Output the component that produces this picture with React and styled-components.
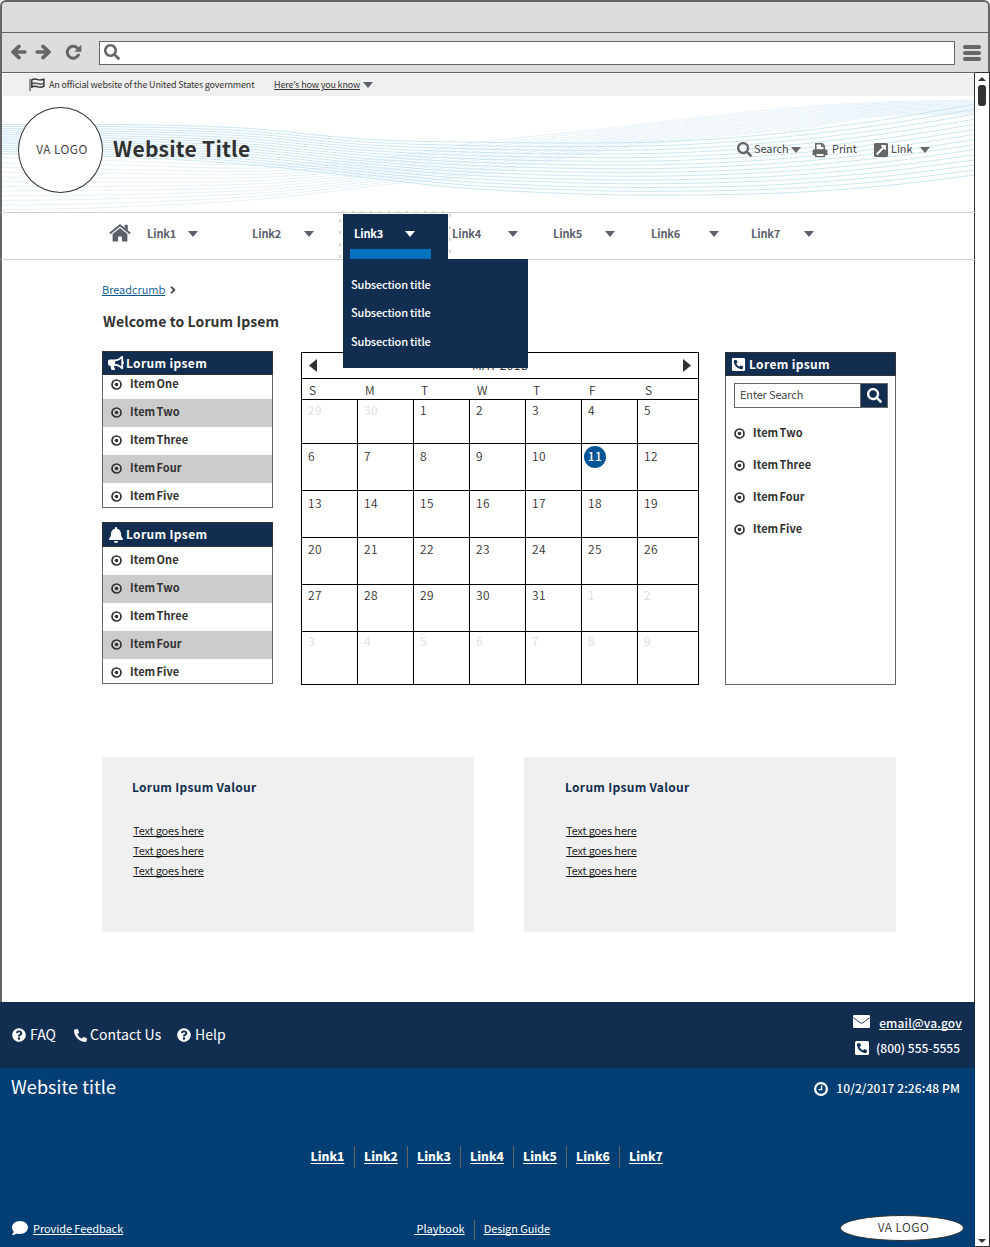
import React from 'react';
import styled, { createGlobalStyle, css } from 'styled-components';
import {
  FaSearch, FaBullhorn, FaBell,
  FaPhoneAlt, FaPhoneSquareAlt, FaQuestionCircle, FaComment, FaExternalLinkSquareAlt,
  FaChevronRight,
} from 'react-icons/fa';

const color = {
  navy: '#112e51',
  blue: '#003e73',
  accent: '#0071bc',
  link: '#005596',
  ink: '#323232',
  nav: '#5b616b',
  frame: '#666666',
  chrome: '#dddddd',
  pale: '#f0f0f0',
  rule: '#d2d2d2',
};

const Global = createGlobalStyle`
  * { box-sizing: border-box; }
  body {
    margin: 0;
    background: #fff;
    color: ${color.ink};
    font-family: "Noto Sans CJK JP", "Noto Sans", sans-serif;
    font-size: 11px;
    line-height: 16px;
    white-space: nowrap;
  }
  svg { display: block; flex: none; }
`;

/* ---------- browser chrome ---------- */

const Browser = styled.div`
  width: 990px;
  height: 1247px;
  display: flex;
  flex-direction: column;
`;

const Chrome = styled.div`
  height: 73px;
  border: 2px solid ${color.frame};
  border-bottom-width: 1px;
  border-radius: 6px 6px 0 0;
  background: ${color.chrome};
`;

const TitleBar = styled.div`
  height: 31px;
  border-bottom: 1px solid ${color.frame};
`;

const Toolbar = styled.div`
  display: flex;
  align-items: center;
  height: 39px;
  padding: 0 7px 0 8px;
  color: ${color.frame};
`;

const ToolButtons = styled.div`
  display: flex;
  align-items: center;
  width: 89px;
  gap: 8px;
  padding-bottom: 1px;

  svg:last-child { margin-left: 5px; }
`;

const AddressBar = styled.div`
  display: flex;
  align-items: center;
  width: 856px;
  height: 24px;
  margin-right: 8px;
  padding: 0 0 2px 4px;
  border: 1px solid ${color.frame};
  background: #fff;
`;

const MenuBars = styled.div`
  display: grid;
  gap: 2px;
  padding-top: 1px;

  i { width: 18px; height: 4px; border-radius: 2px; background: ${color.frame}; }
`;

const Viewport = styled.div`
  display: flex;
  flex: 1;
`;

const Page = styled.div`
  display: flex;
  flex-direction: column;
  width: 975px;
`;

const Sheet = styled.div`
  height: 929px;
  border-left: 2px solid ${color.frame};
  border-right: 1px solid ${color.ink};
  background: #fff;
`;

const Scrollbar = styled.div`
  display: flex;
  flex-direction: column;
  align-items: center;
  justify-content: space-between;
  width: 15px;
  margin-top: -1px;
  padding: 4px 0 3px;
  border: solid ${color.ink};
  border-width: 1px 1px 1px 0;
  background: #fff;
`;

const ScrollTop = styled.div`
  display: grid;
  justify-items: center;
  gap: 4px;
`;

const Thumb = styled.div`
  width: 8px;
  height: 21px;
  border-radius: 3px;
  background: ${color.ink};
`;

/* ---------- header ---------- */

const Banner = styled.div`
  display: flex;
  align-items: center;
  height: 22px;
  margin: 1px 0 0 1px;
  padding-left: 26px;
  background: ${color.pale};
  font-size: 9px;
`;

const BannerText = styled.span`
  width: 225px;
  margin-left: 4px;
  letter-spacing: -0.16px;
`;

const BannerLink = styled.a`
  margin-right: 3px;
  letter-spacing: -0.17px;
  text-decoration: underline;
  text-underline-offset: 1px;
`;

const Header = styled.header`
  position: relative;
  display: flex;
  align-items: center;
  height: 116px;
  padding: 0 44px 8px 16px;
`;

const WaveLines = styled.svg`
  position: absolute;
  left: 0;
  top: 0;
`;

const Logo = styled.div`
  position: relative;
  display: grid;
  place-items: center;
  width: ${(p) => p.$w}px;
  height: ${(p) => p.$h}px;
  border: 1px solid ${color.ink};
  border-radius: 50%;
  background: #fff;
  color: ${color.ink};
  font-size: 12px;
  font-weight: 350;
  letter-spacing: 0.4px;
  padding: 0 0 2px 3px;
`;

const SiteTitle = styled.h1`
  position: relative;
  flex: 1;
  margin: 0 0 5px 10px;
  font-size: 21px;
  line-height: 30px;
  font-weight: 700;
  letter-spacing: 0.25px;
`;

const Action = styled.div`
  position: relative;
  display: flex;
  align-items: center;
  width: ${(p) => p.$w}px;
  height: 18px;
  margin-bottom: 1px;
  color: ${color.frame};
`;

const ActionLabel = styled.span`
  width: ${(p) => p.$w}px;
  margin: 0 0 3px ${(p) => p.$gap}px;
  color: ${color.ink};
  font-weight: 350;
`;

/* ---------- navigation ---------- */

const Nav = styled.nav`
  position: relative;
  display: flex;
  height: 48px;
  margin: 0 -1px;
  padding-left: 108px;
  border: solid ${color.rule};
  border-width: 1px 0;
  color: ${color.nav};
`;

const HomeLink = styled.div`
  width: 38px;
  padding-top: 11px;
`;

const NavItem = styled.div`
  position: relative;
  display: flex;
  width: ${(p) => p.$w}px;
  height: 46px;
  padding: 12px 0 0 ${(p) => p.$pad || 0}px;

  ${(p) => p.$open && css`
    height: 45px;
    margin-top: 1px;
    padding-top: 11px;
    background: ${color.navy};
    color: #fff;
  `}
`;

const NavLabel = styled.span`
  width: ${(p) => p.$w}px;
  font-weight: 700;
  letter-spacing: -0.15px;
`;

const NavCaret = styled.span`
  padding-top: 6px;
`;

const ActiveBar = styled.div`
  position: absolute;
  left: 7px;
  bottom: 0;
  width: 81px;
  height: 10px;
  background: ${color.accent};
`;

const Submenu = styled.div`
  position: absolute;
  z-index: 2;
  left: 0;
  top: 45px;
  display: grid;
  align-content: start;
  gap: 12.3px;
  width: 185px;
  height: 109px;
  padding: 17px 8px;
  background: ${color.navy};
  font-weight: 500;
  letter-spacing: -0.18px;
`;

const FocusDots = styled.svg`
  position: absolute;
  left: -5px;
  top: -5px;
`;

/* ---------- main ---------- */

const Main = styled.main`
  padding: 21px 78px 0 100px;
`;

const Breadcrumb = styled.div`
  display: flex;
  align-items: center;
  gap: 4px;

  a {
    color: ${color.link};
    font-weight: 350;
    text-decoration: underline;
    text-underline-offset: 1px;
  }
  svg { margin-top: 2px; stroke: currentColor; stroke-width: 40px; }
`;

const Welcome = styled.h2`
  margin: 13px 0 0 1px;
  font-size: 14px;
  line-height: 22px;
  font-weight: 700;
  letter-spacing: 0.1px;
`;

const Columns = styled.div`
  display: grid;
  grid-template-columns: 171px 398px 171px;
  column-gap: 28px;
  height: 334px;
  margin-top: 19px;

  > :last-child { margin-left: -2px; }
`;

const Stack = styled.div`
  display: flex;
  flex-direction: column;
  gap: 14px;
`;

const Panel = styled.section`
  display: flex;
  flex-direction: column;
  width: 171px;
  height: ${(p) => p.$h}px;
  border: 1px solid ${color.frame};
  margin-top: ${(p) => p.$top || 0}px;
`;

const PanelHead = styled.div`
  display: flex;
  align-items: center;
  flex: none;
  gap: ${(p) => p.$gap}px;
  height: ${(p) => p.$h || 24}px;
  margin: -1px -1px 0;
  padding-left: 5px;
  border: 1px solid ${color.ink};
  background: ${color.navy};
  color: #fff;
  font-size: 12px;
  font-weight: 700;
  letter-spacing: 0.35px;

  span { margin-bottom: 1px; }
`;

const ItemList = styled.ul`
  display: flex;
  flex-direction: column;
  justify-content: flex-end;
  height: ${(p) => p.$h}px;
  margin: 0;
  padding: 0;
  overflow: hidden;
  list-style: none;
`;

const Item = styled.li`
  display: flex;
  flex: none;
  align-items: center;
  gap: 8.5px;
  height: ${(p) => p.$h || 28}px;
  padding: 0 0 4px 8px;
  background: ${(p) => (p.$shade ? '#cccccc' : 'transparent')};
  font-weight: 700;
  word-spacing: -1.2px;
  letter-spacing: 0.05px;

  svg { margin: 3px 0 0 -0.5px; }
  &:last-child { margin-bottom: ${(p) => p.$clip || 0}px; }
`;

const SearchBox = styled.div`
  display: flex;
  width: 154px;
  height: 25px;
  margin: 7px 0 10px 8px;
  border: 1px solid ${color.frame};
`;

const SearchInput = styled.div`
  flex: 1;
  padding: 2px 5px;
  font-weight: 350;
  letter-spacing: -0.1px;
`;

const SearchButton = styled.div`
  display: grid;
  place-items: center;
  width: 27px;
  border-left: 1px solid ${color.frame};
  background: ${color.navy};
  color: #fff;
`;

/* ---------- calendar ---------- */

const Calendar = styled.section`
  height: 333px;
  margin-top: 1px;
  border: 1px solid #000;
  font-size: 12px;
  font-weight: 350;
`;

const MonthBar = styled.div`
  display: flex;
  align-items: center;
  justify-content: space-between;
  height: 26px;
  padding: 0 7px;
  border-bottom: 1px solid #000;

  span {
    margin-bottom: 2px;
    font-weight: 400;
    letter-spacing: 0.45px;
  }
`;

const Week = styled.div`
  display: grid;
  grid-template-columns: repeat(6, 56px) 60px;
  height: ${(p) => p.$h}px;
  border-bottom: ${(p) => (p.$last ? 'none' : '1px solid #000')};
`;

const Weekday = styled.div`
  padding: 3px 0 0 7px;
`;

const Day = styled.div`
  padding: ${(p) => p.$top}px 0 0 6px;
  border-right: 1px solid #000;
  color: ${(p) => (p.$muted ? '#dcdcdc' : color.ink)};
  letter-spacing: 0.45px;

  &:last-child { border-right: none; }
`;

const Today = styled.div`
  display: grid;
  place-items: center;
  width: 22px;
  height: 22px;
  margin: -2px 0 0 -4px;
  padding-bottom: 2px;
  border-radius: 50%;
  background: ${color.link};
  color: #fff;
  font-weight: 500;
`;

/* ---------- cards ---------- */

const Cards = styled.div`
  display: flex;
  gap: 50px;
  margin-top: 72px;
`;

const Card = styled.section`
  width: 372px;
  height: 175px;
  padding: 21px 0 0 ${(p) => p.$pad}px;
  background: ${color.pale};
`;

const CardTitle = styled.h3`
  margin: 0 0 24px;
  color: ${color.navy};
  font-size: 12px;
  line-height: 18px;
  font-weight: 700;
  letter-spacing: 0.3px;
`;

const CardLink = styled.a`
  display: block;
  margin-left: 1px;
  color: #111;
  font-weight: 350;
  line-height: 20px;
  letter-spacing: -0.11px;
  text-decoration: underline;
  text-decoration-skip-ink: none;
  text-underline-offset: 1px;
`;

/* ---------- footer ---------- */

const FooterTop = styled.div`
  display: flex;
  justify-content: space-between;
  height: 66px;
  padding: 0 13px 0 12px;
  background: ${color.navy};
  color: #fff;
`;

const HelpLinks = styled.div`
  display: flex;
  align-items: center;
  font-size: 14px;
`;

const HelpLink = styled.div`
  display: flex;
  align-items: center;
  gap: ${(p) => p.$gap}px;
  width: ${(p) => p.$w}px;

  span { margin-bottom: 2px; letter-spacing: 0.05px; }
`;

const Contact = styled.div`
  display: grid;
  align-content: start;
  justify-items: end;
  gap: 8px;
  padding-top: 12px;
  font-size: 12px;
  font-weight: 500;
`;

const ContactRow = styled.div`
  display: flex;
  gap: ${(p) => p.$gap}px;
  letter-spacing: ${(p) => p.$track || 0}px;
  padding-right: ${(p) => p.$right || 0}px;

  svg { margin-top: 1px; }
  a { padding-top: 1px; text-decoration: underline; text-decoration-skip-ink: none; text-underline-offset: 1px; }
  span { padding-top: 1px; }
`;

const FooterBottom = styled.div`
  display: flex;
  flex-direction: column;
  height: 179px;
  padding: 7px 11px 6px;
  background: ${color.blue};
  color: #fff;
`;

const FooterHead = styled.div`
  display: flex;
  justify-content: space-between;
  height: 28px;
`;

const FooterTitle = styled.div`
  font-size: 18px;
  line-height: 22px;
  letter-spacing: 0.05px;
`;

const Stamp = styled.div`
  display: flex;
  align-items: center;
  gap: 8px;
  padding-right: 4px;
  font-size: 12px;
  font-weight: 500;
  letter-spacing: 0.1px;

  span { margin-bottom: 3px; }
`;

const LinkRow = styled.div`
  display: flex;
  justify-content: center;
  height: 22px;
  margin: 43px 2px 0 0;
  font-size: 12px;
`;

const FooterLink = styled.a`
  width: 53px;
  padding-top: 2px;
  border-left: ${(p) => (p.$first ? 'none' : `1px solid ${color.frame}`)};
  font-weight: 900;
  text-align: center;
  text-decoration: underline;
  text-underline-offset: 2px;
`;

const FooterBase = styled.div`
  display: grid;
  grid-template-columns: 402px 426px 124px;
  align-items: center;
  height: 26px;
  margin: auto 0 0 1px;

  a { text-decoration: underline; text-decoration-skip-ink: none; text-underline-offset: 1px; }
`;

const Feedback = styled.div`
  display: flex;
  align-items: center;
  gap: 5px;
  letter-spacing: -0.07px;
`;

const Guides = styled.div`
  display: flex;
  height: 20px;
  margin-top: 3px;
  white-space: pre;

  a + a { margin-left: 9px; padding-left: 9px; border-left: 1px solid ${color.frame}; letter-spacing: -0.1px; }
`;

/* ---------- drawings ---------- */

const Triangle = ({ dir = 'down', w = 10, h = 6, fill = 'currentColor' }) => {
  const points = {
    down: `0,0 ${w},0 ${w / 2},${h}`,
    up: `0,${h} ${w},${h} ${w / 2},0`,
    left: `${w},0 ${w},${h} 0,${h / 2}`,
    right: `0,0 ${w},${h / 2} 0,${h}`,
  }[dir];
  return <svg width={w} height={h}><polygon points={points} fill={fill} /></svg>;
};

const ArrowIcon = ({ flip }) => (
  <svg width="17" height="16" viewBox="0 0 17 16" transform={flip ? 'scale(-1 1)' : undefined}>
    <path d="M9 2.400 3 8l6 5.600M3.400 8H14.800" fill="none" stroke="currentColor" strokeWidth="3.700" strokeLinecap="round" strokeLinejoin="round" />
  </svg>
);

const ReloadIcon = () => (
  <svg width="17" height="16" viewBox="0 0 17 16">
    <path d="M12.2 3.9A5.9 5.9 0 1 0 13.4 11" fill="none" stroke="currentColor" strokeWidth="3" strokeLinecap="round" />
    <path d="M16.3.8v7H9.4z" fill="currentColor" />
  </svg>
);

const FlagIcon = () => (
  <svg width="16" height="14" viewBox="0 0 16 14">
    <path d="M1 .8v12.4" stroke={color.nav} strokeWidth="1.3" />
    <path d="M2.8 1.9c2.3-1.3 4.1-1 6.1-.2 2 .7 3.5.5 6-.5v7.2c-2.5 1.1-4 1.2-6 .5-2-.8-3.8-1.1-6.1.2z" fill="none" stroke={color.ink} strokeWidth="1.4" />
    <path d="M2.8 4.9c2.1-1 4-.9 6.1-.1 2.100.8 3.800.5 6-.4v1.900c-2.200 1-4 1-6 .3-2-.8-3.900-1-6.100.2z" fill={color.ink} opacity="0.75" />
  </svg>
);

const HomeIcon = () => (
  <svg width="22" height="18" viewBox="0 0 22 18">
    <path d="M15.6.8h3.2v6l-3.2-2.7z" fill="currentColor" />
    <path d="M.9 9.6 11 1.3l10.1 8.3" fill="none" stroke="currentColor" strokeWidth="2" />
    <path d="M3.6 10.1 11 4l7.4 6.1v7.4h-5.5v-5H9.1v5H3.6z" fill="currentColor" />
  </svg>
);

const Bullet = () => (
  <svg width="11" height="11" viewBox="0 0 11 11">
    <circle cx="5.5" cy="5.5" r="4.5" fill="none" stroke={color.ink} strokeWidth="1.7" />
    <circle cx="5.5" cy="5.5" r="1.8" fill={color.ink} />
  </svg>
);

const PrintIcon = () => (
  <svg width="16" height="16" viewBox="0 0 16 16">
    <path d="M3.8 8V1.8h6.4l2 2V8" fill="#fff" stroke="currentColor" strokeWidth="1.5" />
    <path d="M9.6 1.6v2.8h2.8" fill="none" stroke="currentColor" strokeWidth="1.2" />
    <path d="M2.4 7.2h11.2a1.8 1.8 0 0 1 1.8 1.8v4.2H.6V9a1.8 1.8 0 0 1 1.8-1.8z" fill="currentColor" />
    <path d="M3.8 11.2h8.4v3.4H3.8z" fill="#fff" stroke="currentColor" strokeWidth="1.4" />
  </svg>
);

const ClockIcon = () => (
  <svg width="14" height="14" viewBox="0 0 14 14">
    <circle cx="7" cy="7" r="5.9" fill="none" stroke="currentColor" strokeWidth="2.2" />
    <path d="M7.6 3.6v4H4.6" fill="none" stroke="currentColor" strokeWidth="1.4" />
  </svg>
);

const MailIcon = () => (
  <svg width="17" height="13" viewBox="0 0 17 13">
    <rect width="17" height="13" rx="1.2" fill="currentColor" />
    <path d="M.3 2.6 7 7.7q1.5 1 3 0l6.7-5.1" fill="none" stroke={color.navy} strokeWidth="0.9" />
  </svg>
);

const smooth = (pts) => {
  let d = `M${pts[0][0]} ${pts[0][1]}`;
  for (let i = 0; i < pts.length - 1; i += 1) {
    const a = pts[i - 1] || pts[i];
    const b = pts[i];
    const c = pts[i + 1];
    const e = pts[i + 2] || c;
    d += `C${b[0] + (c[0] - a[0]) / 6} ${(b[1] + (c[1] - a[1]) / 6).toFixed(2)} ${c[0] - (e[0] - b[0]) / 6} ${(c[1] - (e[1] - b[1]) / 6).toFixed(2)} ${c[0]} ${c[1].toFixed(2)}`;
  }
  return d;
};

/* Each station is [x, top of the bundle, bottom of the bundle]. */
const darkBundle = [
  [0, 28.5, 57.5], [120, 28.5, 61], [240, 32, 68], [360, 43, 81], [460, 46, 92], [580, 47, 98],
  [680, 45, 99], [780, 37, 97], [880, 24, 90], [973, 8, 79],
];
const paleBundle = [
  [0, 62, 114], [120, 65, 111], [260, 69, 103], [380, 62, 89], [480, 46, 78],
  [600, 33, 55], [700, 21, 42], [800, 11, 32], [880, 6, 20], [973, 4, 18],
];

const bundle = (stations, count, stroke) =>
  Array.from({ length: count }, (_, i) => (
    <path
      key={`${stroke}${i}`}
      d={smooth(stations.map(([x, t, b]) => [x, t + ((b - t) * i) / (count - 1)]))}
      fill="none"
      stroke={stroke}
      strokeWidth="0.8"
    />
  ));

const Waves = () => (
  <WaveLines width="972" height="116">
    {bundle(paleBundle, 12, '#e0edf8')}
    {bundle(darkBundle, 15, '#bfe0f1')}
  </WaveLines>
);

const TabDots = () => (
  <FocusDots width="114" height="52" fill="#d6d6d6">
    {Array.from({ length: 12 }, (_, i) => <rect key={`t${i}`} x={5 + i * 9} y="2" width="2" height="1" />)}
    {[11, 23, 35, 47].map((y) => <rect key={`l${y}`} x="1" y={y - 1} width="2" height="3" />)}
    {[6, 18, 30, 42].map((y) => <rect key={`r${y}`} x="111" y={y - 1} width="2" height="3" />)}
  </FocusDots>
);

/* ---------- content ---------- */

const nav = [
  { label: 'Link1', w: 105, caret: 41 },
  { label: 'Link2', w: 91, caret: 52 },
  { label: 'Link3', w: 105, caret: 51, pad: 11, open: true },
  { label: 'Link4', w: 105, caret: 56, pad: 4 },
  { label: 'Link5', w: 98, caret: 52 },
  { label: 'Link6', w: 100, caret: 58 },
  { label: 'Link7', w: 100, caret: 53 },
];

const items = ['Item One', 'Item Two', 'Item Three', 'Item Four', 'Item Five'];

const weeks = [
  { h: 44, top: 2, days: [-29, -30, 1, 2, 3, 4, 5] },
  { h: 47, top: 4, days: [6, 7, 8, 9, 10, 11, 12] },
  { h: 47, top: 4, days: [13, 14, 15, 16, 17, 18, 19] },
  { h: 47, top: 3, days: [20, 21, 22, 23, 24, 25, 26] },
  { h: 47, top: 2, days: [27, 28, 29, 30, 31, -1, -2] },
  { h: 52, top: 1, days: [-3, -4, -5, -6, -7, -8, -9] },
];

const LinkPanel = ({ icon, title, h, headH, listH, clip }) => (
  <Panel $h={h}>
    <PanelHead $gap={2} $h={headH}>{icon}<span>{title}</span></PanelHead>
    <ItemList $h={listH}>
      {items.map((t, i) => (
        <Item key={t} $shade={i % 2 === 1} $clip={clip}><Bullet />{t}</Item>
      ))}
    </ItemList>
  </Panel>
);

export default function App() {
  return (
    <Browser>
      <Global />
      <Chrome>
        <TitleBar />
        <Toolbar>
          <ToolButtons>
            <ArrowIcon /><ArrowIcon flip /><ReloadIcon />
          </ToolButtons>
          <AddressBar><FaSearch size={16} /></AddressBar>
          <MenuBars><i /><i /><i /></MenuBars>
        </Toolbar>
      </Chrome>
      <Viewport>
        <Page>
          <Sheet>
            <Banner>
              <FlagIcon />
              <BannerText>An official website of the United States government</BannerText>
              <BannerLink>Here's how you know</BannerLink>
              <Triangle fill={color.nav} />
            </Banner>
            <Header>
              <Waves />
              <Logo $w={85} $h={86}>VA LOGO</Logo>
              <SiteTitle>Website Title</SiteTitle>
              <Action $w={75}><FaSearch size={15} /><ActionLabel $w={37} $gap={2}>Search</ActionLabel><Triangle /></Action>
              <Action $w={61}><PrintIcon /><ActionLabel $w={26} $gap={4}>Print</ActionLabel></Action>
              <Action $w={57}><FaExternalLinkSquareAlt size={16} /><ActionLabel $w={30} $gap={2}>Link</ActionLabel><Triangle /></Action>
            </Header>
            <Nav>
              <HomeLink><HomeIcon /></HomeLink>
              {nav.map((n) => (
                <NavItem key={n.label} $w={n.w} $pad={n.pad} $open={n.open}>
                  <NavLabel $w={n.caret}>{n.label}</NavLabel>
                  <NavCaret><Triangle /></NavCaret>
                  {n.open && (
                    <>
                      <TabDots />
                      <ActiveBar />
                      <Submenu>
                        <span>Subsection title</span>
                        <span>Subsection title</span>
                        <span>Subsection title</span>
                      </Submenu>
                    </>
                  )}
                </NavItem>
              ))}
            </Nav>
            <Main>
              <Breadcrumb><a>Breadcrumb</a><FaChevronRight size={8} /></Breadcrumb>
              <Welcome>Welcome to Lorum Ipsem</Welcome>
              <Columns>
                <Stack>
                  <LinkPanel icon={<FaBullhorn size={16} />} title="Lorum ipsem" h={157} headH={24} listH={132} clip={-4} />
                  <LinkPanel icon={<FaBell size={16} />} title="Lorum Ipsem" h={162} headH={25} listH={136} clip={-4} />
                </Stack>
                <Calendar>
                  <MonthBar>
                    <Triangle dir="left" w={8} h={13} />
                    <span>MAY 2018</span>
                    <Triangle dir="right" w={8} h={13} />
                  </MonthBar>
                  <Week $h={21}>
                    {['S', 'M', 'T', 'W', 'T', 'F', 'S'].map((d, i) => <Weekday key={i}>{d}</Weekday>)}
                  </Week>
                  {weeks.map((w, i) => (
                    <Week key={i} $h={w.h} $last={i === 5}>
                      {w.days.map((d) => (
                        <Day key={d} $top={w.top} $muted={d < 0}>
                          {d === 11 ? <Today>{d}</Today> : Math.abs(d)}
                        </Day>
                      ))}
                    </Week>
                  ))}
                </Calendar>
                <Panel $h={333} $top={1}>
                  <PanelHead $gap={3}><FaPhoneSquareAlt size={15} /><span>Lorem ipsum</span></PanelHead>
                  <SearchBox>
                    <SearchInput>Enter Search</SearchInput>
                    <SearchButton><FaSearch size={15} /></SearchButton>
                  </SearchBox>
                  {items.slice(1).map((t) => <Item key={t} $h={32}><Bullet />{t}</Item>)}
                </Panel>
              </Columns>
              <Cards>
                {[30, 41].map((pad) => (
                  <Card key={pad} $pad={pad}>
                    <CardTitle>Lorum Ipsum Valour</CardTitle>
                    <CardLink>Text goes here</CardLink>
                    <CardLink>Text goes here</CardLink>
                    <CardLink>Text goes here</CardLink>
                  </Card>
                ))}
              </Cards>
            </Main>
          </Sheet>
          <FooterTop>
            <HelpLinks>
              <HelpLink $w={62} $gap={4}><FaQuestionCircle size={14} /><span>FAQ</span></HelpLink>
              <HelpLink $w={103} $gap={3}><FaPhoneAlt size={13} /><span>Contact Us</span></HelpLink>
              <HelpLink $w={60} $gap={4}><FaQuestionCircle size={14} /><span>Help</span></HelpLink>
            </HelpLinks>
            <Contact>
              <ContactRow $gap={9} $track={0.15}><MailIcon /><a>email@va.gov</a></ContactRow>
              <ContactRow $gap={6} $right={2}><FaPhoneSquareAlt size={16} /><span>(800) 555-5555</span></ContactRow>
            </Contact>
          </FooterTop>
          <FooterBottom>
            <FooterHead>
              <FooterTitle>Website title</FooterTitle>
              <Stamp><ClockIcon /><span>10/2/2017 2:26:48 PM</span></Stamp>
            </FooterHead>
            <LinkRow>
              {nav.map((n, i) => <FooterLink key={n.label} $first={i === 0}>{n.label}</FooterLink>)}
            </LinkRow>
            <FooterBase>
              <Feedback><FaComment size={16} /><a>Provide Feedback</a></Feedback>
              <Guides><a> Playbook</a><a>Design Guide</a></Guides>
              <Logo $w={124} $h={26}>VA LOGO</Logo>
            </FooterBase>
          </FooterBottom>
        </Page>
        <Scrollbar>
          <ScrollTop><Triangle dir="up" w={8} h={4} fill={color.ink} /><Thumb /></ScrollTop>
          <Triangle w={8} h={4} fill={color.ink} />
        </Scrollbar>
      </Viewport>
    </Browser>
  );
}
